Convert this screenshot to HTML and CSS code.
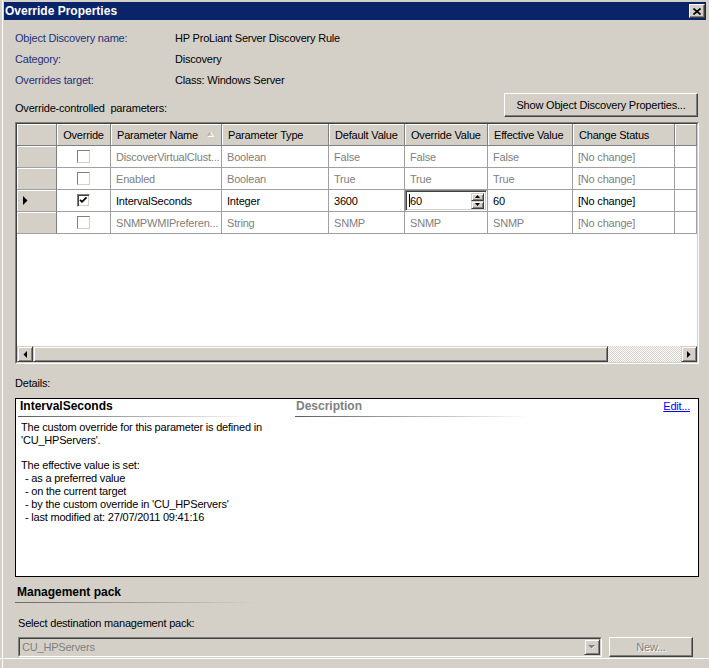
FILE: index.html
```html
<!DOCTYPE html>
<html>
<head>
<meta charset="utf-8">
<link rel="stylesheet" href="styles.css">
</head>
<body>
<div class="window">
  <div class="titlebar">
    <span class="title">Override Properties</span>
    <span class="close"><svg width="8" height="7" viewBox="0 0 8 7"><path d="M0.5 0.5 L7.5 6.5 M7.5 0.5 L0.5 6.5" stroke="#000" stroke-width="1.6" fill="none"/></svg></span>
  </div>
  <div class="body">
    <div class="info">
      <div class="info-row"><span class="k">Object Discovery name:</span><span class="v">HP ProLiant Server Discovery Rule</span></div>
      <div class="info-row"><span class="k">Category:</span><span class="v">Discovery</span></div>
      <div class="info-row"><span class="k">Overrides target:</span><span class="v">Class: Windows Server</span></div>
    </div>
    <div class="params-head">
      <span class="params-label">Override-controlled&nbsp; parameters:</span>
      <div class="btn">Show Object Discovery Properties...</div>
    </div>
    <div class="grid">
      <div class="grid-inner">
        <div class="grow ghead">
          <div class="hc"></div>
          <div class="hc center">Override</div>
          <div class="hc">Parameter Name<svg class="sort" width="7" height="6" viewBox="0 0 7 6"><path d="M0.5 5.5 L3.5 0.5" stroke="#a0a0a0" fill="none"/><path d="M3.5 0.5 L6.5 5.5 L0.5 5.5" stroke="#ffffff" fill="none"/></svg></div>
          <div class="hc">Parameter Type</div>
          <div class="hc">Default Value</div>
          <div class="hc">Override Value</div>
          <div class="hc">Effective Value</div>
          <div class="hc">Change Status</div>
          <div class="hc"></div>
        </div>
        <div class="grow">
          <div class="rh"></div>
          <div class="c center"><span class="cb dis"></span></div>
          <div class="c">DiscoverVirtualClust...</div>
          <div class="c">Boolean</div>
          <div class="c">False</div>
          <div class="c">False</div>
          <div class="c">False</div>
          <div class="c">[No change]</div>
          <div class="c"></div>
        </div>
        <div class="grow">
          <div class="rh"></div>
          <div class="c center"><span class="cb dis"></span></div>
          <div class="c">Enabled</div>
          <div class="c">Boolean</div>
          <div class="c">True</div>
          <div class="c">True</div>
          <div class="c">True</div>
          <div class="c">[No change]</div>
          <div class="c"></div>
        </div>
        <div class="grow active">
          <div class="rh"><svg class="rowarrow" width="5" height="9" viewBox="0 0 5 9"><path d="M0 0 L4.5 4.5 L0 9 Z" fill="#000"/></svg></div>
          <div class="c center"><span class="cb"><svg width="9" height="9" viewBox="0 0 9 9"><path d="M1 3.8 L3 5.8 L7.5 1.3" stroke="#000" stroke-width="1.8" fill="none"/></svg></span></div>
          <div class="c">IntervalSeconds</div>
          <div class="c">Integer</div>
          <div class="c">3600</div>
          <div class="c editcell">
            <div class="spin-edit">
              <div class="edit-text"><span class="caret"></span>60</div>
              <div class="spin">
                <div class="sb"><svg width="5" height="3" viewBox="0 0 5 3"><path d="M0 3 L2.5 0 L5 3 Z" fill="#000"/></svg></div>
                <div class="sb"><svg width="5" height="3" viewBox="0 0 5 3"><path d="M0 0 L5 0 L2.5 3 Z" fill="#000"/></svg></div>
              </div>
            </div>
          </div>
          <div class="c">60</div>
          <div class="c">[No change]</div>
          <div class="c"></div>
        </div>
        <div class="grow">
          <div class="rh"></div>
          <div class="c center"><span class="cb dis"></span></div>
          <div class="c">SNMPWMIPreferen...</div>
          <div class="c">String</div>
          <div class="c">SNMP</div>
          <div class="c">SNMP</div>
          <div class="c">SNMP</div>
          <div class="c">[No change]</div>
          <div class="c"></div>
        </div>
        <div class="grid-empty"></div>
        <div class="hscroll">
          <div class="sbtn"><svg width="4" height="7" viewBox="0 0 4 7"><path d="M4 0 L0.5 3.5 L4 7 Z" fill="#000"/></svg></div>
          <div class="thumb"></div>
          <div class="track"></div>
          <div class="sbtn"><svg width="4" height="7" viewBox="0 0 4 7"><path d="M0 0 L3.5 3.5 L0 7 Z" fill="#000"/></svg></div>
        </div>
      </div>
    </div>
    <div class="details-label">Details:</div>
    <div class="details">
      <div class="dhead">
        <div class="dh dh-left">IntervalSeconds</div>
        <div class="dh dh-desc">Description</div>
        <span class="edit">Edit...</span>
      </div>
      <div class="dtext">
        <div>The custom override for this parameter is defined in</div>
        <div>'CU_HPServers'.</div>
        <div>&nbsp;</div>
        <div>The effective value is set:</div>
        <div class="ind">- as a preferred value</div>
        <div class="ind">- on the current target</div>
        <div class="ind">- by the custom override in 'CU_HPServers'</div>
        <div class="ind">- last modified at: 27/07/2011 09:41:16</div>
      </div>
    </div>
    <div class="mp-title">Management pack</div>
    <div class="select-label">Select destination management pack:</div>
    <div class="combo-row">
      <div class="combo">
        <div class="combo-inner">
          <span class="combo-text">CU_HPServers</span>
          <span class="combo-btn"><svg width="8" height="5" viewBox="0 0 8 5"><path d="M1 1 L7 1 L4 4 Z" fill="#ffffff"/><path d="M0 0 L7 0 L3.5 3.5 Z" fill="#808080"/></svg></span>
        </div>
      </div>
      <div class="newbtn">New...</div>
    </div>
    <div class="sep"></div>
  </div>
</div>
</body>
</html>
```

FILE: styles.css
```css
html, body {
  margin: 0;
  padding: 0;
}
body {
  background: #d4d0c8;
  font-family: "Liberation Sans", Arial, sans-serif;
  font-size: 11px;
  letter-spacing: -0.2px;
  color: #000;
}
.window {
  width: 709px;
  height: 668px;
  box-sizing: border-box;
  padding: 2px 3px 0 4px;
  box-shadow: inset 2px 0 0 #d4d0c8, inset 3px 0 0 #ffffff;
  overflow: hidden;
}
.titlebar {
  height: 18px;
  background: #0a246a;
  display: flex;
  align-items: center;
  justify-content: space-between;
  padding: 0 1px 0 1px;
}
.title {
  color: #fff;
  font-weight: bold;
  font-size: 12px;
  letter-spacing: 0;
}
.close {
  width: 16px;
  height: 14px;
  box-sizing: border-box;
  background: #d4d0c8;
  border: 1px solid;
  border-color: #fff #404040 #404040 #fff;
  box-shadow: inset -1px -1px 0 #808080;
  display: flex;
  align-items: center;
  justify-content: center;
}
.body {
  padding: 0 7px 0 11px;
}
.info {
  margin-top: 8px;
}
.info-row {
  display: flex;
  height: 21px;
  line-height: 21px;
}
.k {
  width: 160px;
  color: #22327a;
}
.params-head {
  margin-top: 2px;
  height: 24px;
  display: flex;
  align-items: flex-end;
  justify-content: space-between;
}
.params-label {
  line-height: 13px;
  padding-bottom: 2px;
}
.btn {
  width: 194px;
  height: 24px;
  margin-right: 1px;
  box-sizing: border-box;
  border: 1px solid;
  border-color: #fff #404040 #404040 #fff;
  box-shadow: inset -1px -1px 0 #808080;
  display: flex;
  align-items: center;
  justify-content: center;
}
.grid {
  margin-top: 5px;
  height: 242px;
  box-sizing: border-box;
  border: 1px solid;
  border-color: #808080 #fff #fff #808080;
}
.grid-inner {
  height: 100%;
  box-sizing: border-box;
  border: 1px solid;
  border-color: #404040 #d4d0c8 #d4d0c8 #404040;
  background: #fff;
  display: flex;
  flex-direction: column;
}
.grow {
  display: grid;
  grid-template-columns: 40px 54px 111px 107px 76px 83px 85px 102px 22px;
  height: 22px;
  flex: none;
}
.hc {
  box-sizing: border-box;
  background: #d4d0c8;
  border-right: 1px solid #808080;
  border-bottom: 1px solid #808080;
  box-shadow: inset 1px 1px 0 #fff;
  padding-left: 6px;
  display: flex;
  align-items: center;
  white-space: nowrap;
  overflow: hidden;
}
.hc.center {
  justify-content: center;
  padding-left: 0;
}
.sort {
  margin-left: auto;
  margin-right: 7px;
  margin-top: -2px;
}
.rh {
  box-sizing: border-box;
  background: #d4d0c8;
  border-right: 1px solid #808080;
  border-bottom: 1px solid #a0a0a0;
  box-shadow: inset 1px 1px 0 #fff;
  display: flex;
  align-items: center;
  padding-left: 6px;
}
.c {
  box-sizing: border-box;
  border-right: 1px solid #a0a0a0;
  border-bottom: 1px solid #a0a0a0;
  padding-left: 5px;
  display: flex;
  align-items: center;
  white-space: nowrap;
  overflow: hidden;
  color: #808080;
}
.active .c {
  color: #000;
}
.c.center {
  justify-content: center;
  padding-left: 0;
}
.cb {
  width: 13px;
  height: 13px;
  box-sizing: border-box;
  border: 1px solid;
  border-color: #808080 #fff #fff #808080;
  background: #fff;
  box-shadow: inset 1px 1px 0 #404040, inset -1px -1px 0 #d4d0c8;
  display: flex;
  align-items: center;
  justify-content: center;
}
.cb.dis {
  border-color: #808080 #d4d0c8 #d4d0c8 #808080;
  box-shadow: none;
}
.c.editcell {
  padding-left: 0;
  align-items: stretch;
}
.spin-edit {
  width: 82px;
  height: 21px;
  box-sizing: border-box;
  border: 1px solid;
  border-color: #808080 #fff #fff #808080;
  box-shadow: inset 1px 1px 0 #404040, inset -1px -1px 0 #d4d0c8;
  background: #fff;
  display: flex;
  align-items: center;
  padding: 1px;
}
.edit-text {
  flex: 1;
  padding-left: 2px;
  display: flex;
  align-items: center;
  color: #000;
}
.caret {
  width: 1px;
  height: 13px;
  background: #000;
  margin-right: 0;
}
.spin {
  width: 13px;
  height: 16px;
  margin-right: 1px;
  display: flex;
  flex-direction: column;
}
.sb {
  height: 8px;
  box-sizing: border-box;
  background: #d4d0c8;
  border: 1px solid;
  border-color: #d4d0c8 #404040 #404040 #d4d0c8;
  box-shadow: inset 1px 1px 0 #fff, inset -1px -1px 0 #808080;
  display: flex;
  align-items: center;
  justify-content: center;
}
.grid-empty {
  flex: 1;
}
.hscroll {
  height: 16px;
  display: flex;
  flex: none;
}
.sbtn, .thumb {
  box-sizing: border-box;
  background: #d4d0c8;
  border: 1px solid;
  border-color: #d4d0c8 #404040 #404040 #d4d0c8;
  box-shadow: inset 1px 1px 0 #fff, inset -1px -1px 0 #808080;
}
.sbtn {
  width: 16px;
  display: flex;
  align-items: center;
  justify-content: center;
}
.thumb {
  width: 575px;
}
.track {
  flex: 1;
  background: repeating-conic-gradient(#ffffff 0 25%, #d4d0c8 0 50%) 0 0 / 2px 2px;
}
.details-label {
  margin-top: 13px;
  line-height: 13px;
}
.details {
  margin-top: 8px;
  height: 179px;
  box-sizing: border-box;
  border: 1px solid #000;
  background: #fff;
  padding: 0 8px 0 2px;
}
.dhead {
  display: flex;
  height: 18px;
}
.dh {
  box-sizing: border-box;
  height: 18px;
  font-weight: bold;
  font-size: 12px;
  letter-spacing: 0;
  line-height: 14px;
  background: linear-gradient(to right, #5c5c5c, #ffffff) left bottom / 100% 1px no-repeat;
}
.dh-left {
  width: 237px;
  padding-left: 2px;
}
.dh-desc {
  margin-left: 40px;
  width: 235px;
  padding-left: 1px;
  color: #808080;
}
.edit {
  margin-left: auto;
  color: #0000ff;
  text-decoration: underline;
  line-height: 14px;
}
.dtext {
  margin-top: 4px;
  padding-left: 3px;
  line-height: 12.8px;
}
.dtext .ind {
  padding-left: 4px;
}
.mp-title {
  margin-top: 8px;
  width: 243px;
  box-sizing: border-box;
  padding: 0 0 4px 2px;
  font-weight: bold;
  font-size: 12px;
  letter-spacing: 0;
  line-height: 14px;
  background: linear-gradient(to right, #6a6a6a, #d4d0c8) left bottom / 100% 1px no-repeat;
}
.select-label {
  margin-top: 14px;
  line-height: 13px;
  padding-left: 3px;
}
.combo-row {
  margin-top: 7px;
  height: 20px;
  display: flex;
}
.combo {
  margin-left: 3px;
  width: 584px;
  box-sizing: border-box;
  border: 1px solid;
  border-color: #808080 #fff #fff #808080;
  background: #d4d0c8;
  display: flex;
}
.combo-inner {
  flex: 1;
  border: 1px solid;
  border-color: #404040 #d4d0c8 #d4d0c8 #404040;
  display: flex;
  align-items: center;
  justify-content: space-between;
  padding-left: 2px;
  color: #808080;
}
.combo-btn {
  width: 16px;
  height: 16px;
  box-sizing: border-box;
  border: 1px solid;
  border-color: #d4d0c8 #404040 #404040 #d4d0c8;
  box-shadow: inset 1px 1px 0 #fff, inset -1px -1px 0 #808080;
  display: flex;
  align-items: center;
  justify-content: center;
}
.newbtn {
  margin-left: 7px;
  width: 84px;
  height: 20px;
  box-sizing: border-box;
  border: 1px solid;
  border-color: #fff #404040 #404040 #fff;
  box-shadow: inset -1px -1px 0 #808080;
  display: flex;
  align-items: center;
  justify-content: center;
  color: #808080;
  text-shadow: 1px 1px 0 #fff;
}
.sep {
  margin: 1px -10px 0 -15px;
  height: 1px;
  background: #fff;
}
```
